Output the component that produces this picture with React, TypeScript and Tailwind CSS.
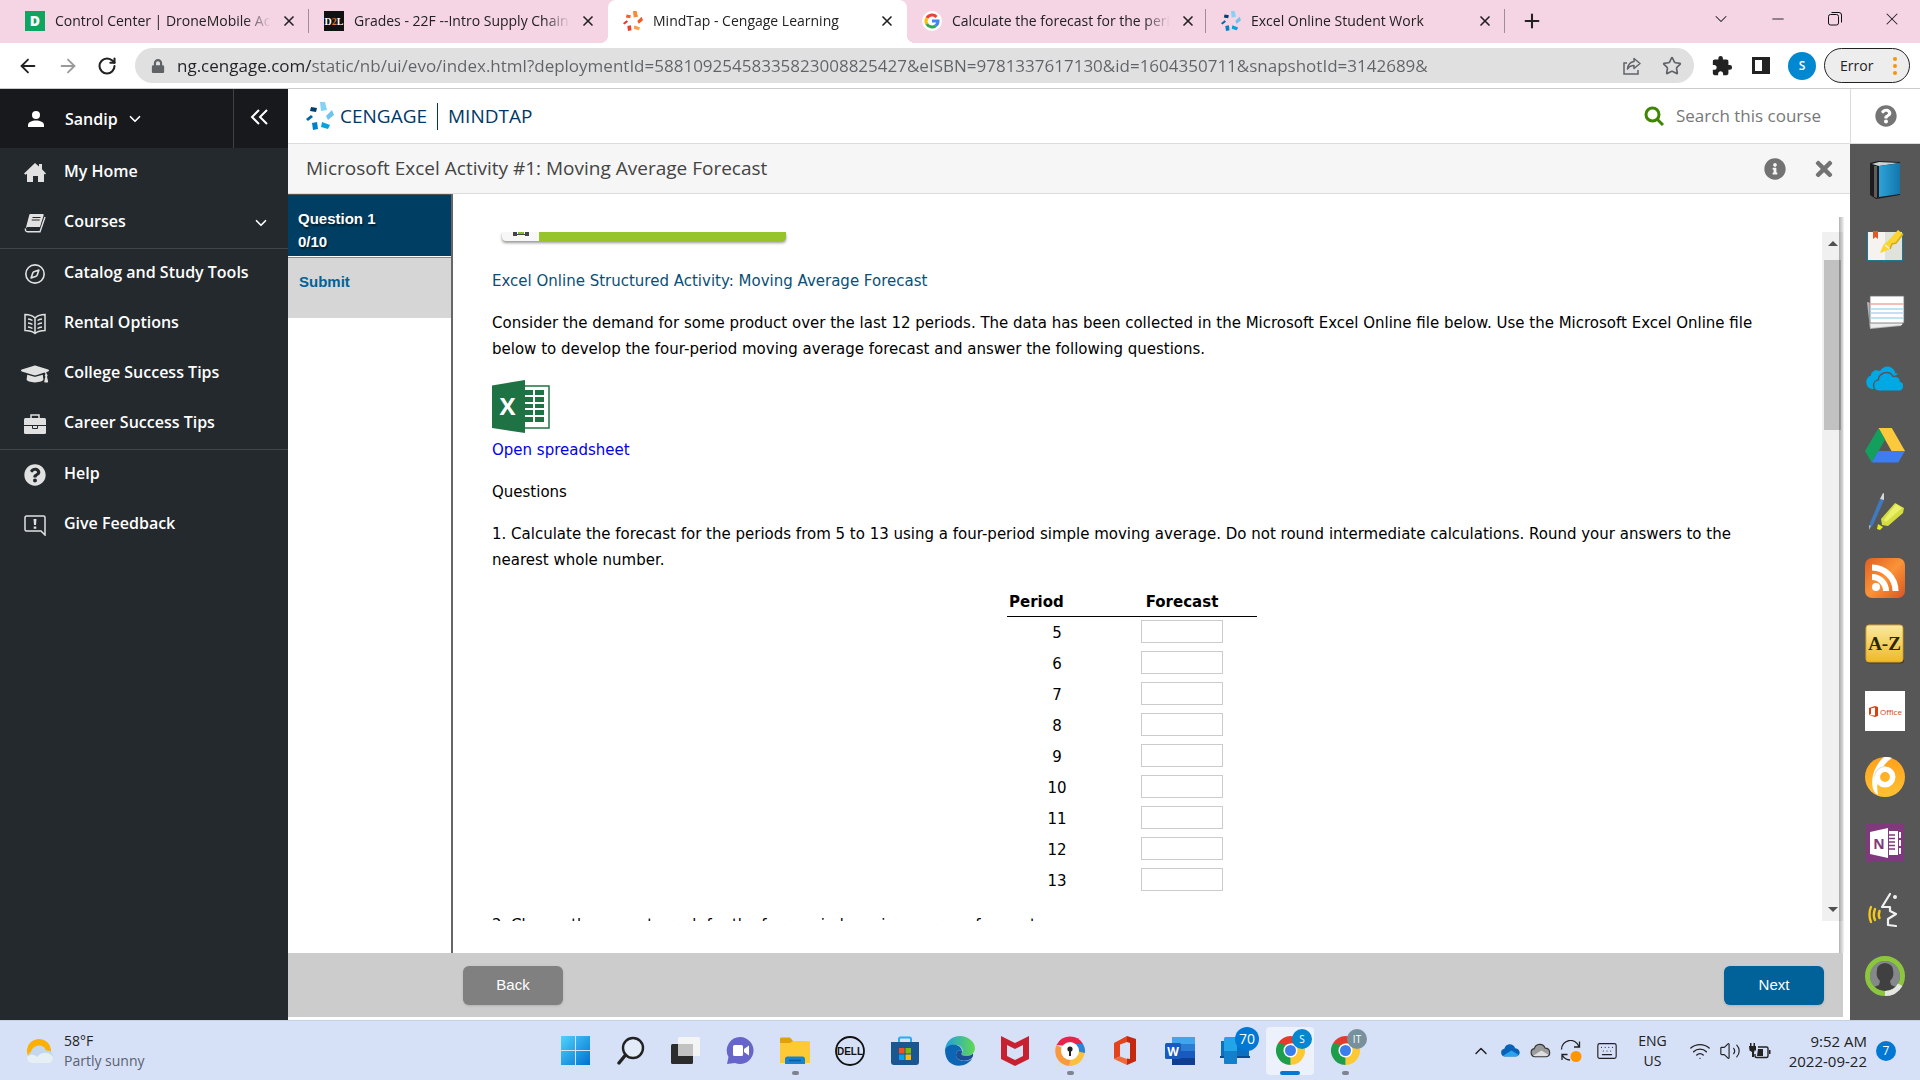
import type { ReactNode } from "react";

import clsx from "clsx";
import {
  ArrowLeft,
  ArrowRight,
  ChevronDown,
  ChevronUp,
  Compass,
  Keyboard,
  Minus,
  Plus,
  RotateCw,
  Star,
  Volume2,
  Wifi,
  X,
} from "lucide-react";
import { FaGraduationCap, FaInfoCircle, FaLock, FaQuestionCircle, FaTimes } from "react-icons/fa";
import { MdExtension } from "react-icons/md";

interface Tab {
  title: string;
  icon: ReactNode;
  active?: boolean;
  divider?: boolean;
}

interface NavItem {
  label: string;
  icon: ReactNode;
  expandable?: boolean;
  ruled?: boolean;
}

interface TaskbarApp {
  name: string;
  icon: ReactNode;
  running?: boolean;
  active?: boolean;
}

const PERIODS = [5, 6, 7, 8, 9, 10, 11, 12, 13];

const PAGE_URL =
  "ng.cengage.com/static/nb/ui/evo/index.html?deploymentId=58810925458335823008825427&eISBN=9781337617130&id=1604350711&snapshotId=3142689&";

/* ---------- logos ---------- */

function CengageMark({ colors, className }: { colors: string[]; className: string }) {
  return (
    <svg viewBox="0 0 28 28" className={className} aria-hidden="true">
      <path d="M14 0h5l2 8-6 1z" fill={colors[0]} />
      <path d="M20 14l6-6 2 5-6 5z" fill={colors[1]} />
      <path d="M16 20l8 3-2 4-7-2z" fill={colors[2]} />
      <path d="M6 21l5-1 1 7-5 1z" fill={colors[3]} />
      <path d="M0 17l5-4 2 2-5 4z" fill={colors[4]} />
      <path d="M5 5l6 1-1 4-6-1z" fill={colors[5]} />
    </svg>
  );
}

const BLUE_MARK = ["#81d3f8", "#6cc5ee", "#00a5e0", "#0082c8", "#0067a5", "#003f6b"];
const ORANGE_MARK = ["#f68b33", "#f05a28", "#f9a04a", "#e8402a", "#ee3124", "#f0632b"];

function DroneMobileIcon() {
  return (
    <svg viewBox="0 0 20 20" className="size-5 shrink-0" aria-hidden="true">
      <rect width="20" height="20" fill="#0ca660" />
      <text x="10" y="15" textAnchor="middle" fontFamily="Open Sans, sans-serif" fontWeight="800" fontSize="14" fill="#fff">
        D
      </text>
    </svg>
  );
}

function BrightspaceIcon() {
  return (
    <svg viewBox="0 0 20 20" className="size-5 shrink-0" aria-hidden="true">
      <rect width="20" height="20" fill="#111" />
      <text x="10" y="14" textAnchor="middle" fontFamily="Liberation Serif, serif" fontWeight="700" fontSize="10" fill="#fff">
        D<tspan fill="#e8762c">2</tspan>L
      </text>
    </svg>
  );
}

function GoogleIcon() {
  return (
    <svg viewBox="0 0 20 20" className="size-5 shrink-0" aria-hidden="true">
      <circle cx="10" cy="10" r="10" fill="#fff" />
      <g fill="none" strokeWidth="3">
        <path d="M14.500 5.900A6 6 0 0 0 4.900 7" stroke="#ea4335" />
        <path d="M4.900 6.900a6 6 0 0 0 0 6.200" stroke="#fbbc05" />
        <path d="M4.800 12.900a6 6 0 0 0 8.900 1.800" stroke="#34a853" />
        <path d="M13.600 14.800A6 6 0 0 0 16 10h-6" stroke="#4285f4" />
      </g>
    </svg>
  );
}

function RestoreIcon() {
  return (
    <svg viewBox="0 0 14 14" className="size-[14px]" fill="none" stroke="#111" aria-hidden="true">
      <rect x="0.5" y="2.5" width="10" height="10.500" rx="2" />
      <path d="M3.500 .5H11a2.500 2.500 0 0 1 2.500 2.500v7.500" />
    </svg>
  );
}

function ShareIcon() {
  return (
    <svg viewBox="0 0 20 20" className="size-5" fill="none" stroke="#5f6368" strokeWidth="1.5" aria-hidden="true">
      <path d="M5 7H2v11h14v-4" />
      <path d="M12 2.500l6 5-6 5V9.500c-3 0-5 1-6.500 3.500.5-4 2.500-7 6.500-7.500z" strokeLinejoin="round" />
    </svg>
  );
}

/* ---------- left navigation ---------- */

function UserIcon() {
  return (
    <svg viewBox="0 0 18 18" className="size-[18px]" fill="#fff" aria-hidden="true">
      <circle cx="9" cy="5" r="4" />
      <path d="M1 17v-2c0-3 4-4.500 8-4.500s8 1.500 8 4.500v2z" />
    </svg>
  );
}

function HomeIcon() {
  return (
    <svg viewBox="0 0 22 20" className="h-5 w-[22px]" fill="#e1e1e1" aria-hidden="true">
      <path d="M11 0l4 3.500V1h3v5.200l4 4.300-1 1-1-.8V19h-6v-6H9v6H3v-8.300l-1.500 1L0 10.500z" />
    </svg>
  );
}

function CoursesIcon() {
  return (
    <svg viewBox="0 0 22 20" className="h-5 w-[22px]" aria-hidden="true">
      <path d="M6 1h12.500c1 0 1.400.7 1.100 1.600L16 14H4.500c-1.500 0-2.500.6-2.800 1.500L5 3c.3-1.200.5-2 1-2z" fill="#e1e1e1" />
      <path d="M1.500 15.500C1 17.500 2 18.700 3.500 18.700H16L21 4" fill="none" stroke="#e1e1e1" strokeWidth="1.400" />
      <path d="M8.500 4.500h8M7.700 7h8" stroke="#24292d" strokeWidth="1.200" />
    </svg>
  );
}

function RentalIcon() {
  return (
    <svg viewBox="0 0 22 22" className="size-[22px]" fill="none" stroke="#e1e1e1" strokeWidth="1.500" aria-hidden="true">
      <path d="M1 1.500c4 0 7 .5 10 3.500 3-3 6-3.500 10-3.500v16c-4 0-7 .5-10 3-3-2.500-6-3-10-3zM11 5v15.500" />
      <path d="M4 6c2 .2 3.500.8 4.500 1.500M4 10c2 .2 3.500.8 4.500 1.500M4 14c2 .2 3.500.8 4.500 1.500M18 6c-2 .2-3.500.8-4.500 1.500M18 10c-2 .2-3.500.8-4.500 1.500M18 14c-2 .2-3.500.8-4.500 1.500" />
    </svg>
  );
}

function CareerIcon() {
  return (
    <svg viewBox="0 0 22 20" className="h-5 w-[22px]" aria-hidden="true">
      <path d="M7 4V1h8v3" fill="none" stroke="#e1e1e1" strokeWidth="1.500" />
      <rect y="4" width="22" height="16" rx="1.500" fill="#e1e1e1" />
      <path d="M0 11.500h22" stroke="#24292d" />
      <path d="M8.500 12v2.500h5V12" fill="none" stroke="#24292d" />
    </svg>
  );
}

function FeedbackIcon() {
  return (
    <svg viewBox="0 0 22 21" className="h-[21px] w-[22px]" aria-hidden="true">
      <path
        d="M2.500 1h17c1 0 1.500.6 1.500 1.500V20l-4-4H2.500C1.500 16 1 15.500 1 14.500v-12C1 1.600 1.500 1 2.500 1z"
        fill="none"
        stroke="#e1e1e1"
        strokeWidth="1.500"
      />
      <path d="M9.500 4h3L12 10h-2zM9.700 11.500h2.600v2.200H9.700z" fill="#e1e1e1" />
    </svg>
  );
}

/* ---------- learning tools ---------- */

function EbookIcon() {
  return (
    <svg viewBox="0 0 40 40" className="size-10" aria-hidden="true">
      <defs>
        <linearGradient id="cover" x1="0" x2="1">
          <stop offset="0" stopColor="#2ea3d8" />
          <stop offset="1" stopColor="#1276ad" />
        </linearGradient>
      </defs>
      <path d="M5 3l8-2 22 1v33L11 39l-6-4z" fill="#1c1c1c" />
      <path d="M9 6v31l3 1V6z" fill="#5d5d5d" />
      <path d="M7 4l7-2 20 1-20 3z" fill="#c9d3d8" />
      <path d="M14 6l21-3v31l-21 3z" fill="url(#cover)" />
    </svg>
  );
}

function NotebookIcon() {
  return (
    <svg viewBox="0 0 40 40" className="size-10" aria-hidden="true">
      <path d="M2 6h36v29H22l-2 1.500L18 35H2z" fill="#1b7893" />
      <path d="M3 6h17v28H3z" fill="#f5f2f0" />
      <path d="M20 6h17v28H20z" fill="#e0e2dc" />
      <path d="M8 5h5v8l-2.500-2L8 13z" fill="#e2582c" />
      <path d="M33 4l5 4-7 9-4 1-2 5-7 3-3 1 2-5 2-4 3-2z" fill="#fbd62e" />
      <path d="M20 19l5 4" stroke="#f5f2f0" strokeWidth="1.500" />
      <path d="M38 8l-7 9-4 1-2 5" fill="none" stroke="#d9a91c" strokeWidth="1.500" />
    </svg>
  );
}

function FlashcardsIcon() {
  return (
    <svg viewBox="0 0 40 40" className="size-10" aria-hidden="true">
      <path d="M2 9l4 1 31 20-1 3L5 36z" fill="#b7b7b7" />
      <path d="M5 29h33l-1 3L6 35z" fill="#ececec" />
      <path d="M5 3h34v27H5z" fill="#fff" stroke="#6c6c6c" strokeWidth="0.800" />
      <path d="M5 11h34" stroke="#f4a7a7" strokeWidth="1.500" />
      <path d="M5 16h34M5 20h34M5 25h34" stroke="#a9dcee" strokeWidth="1.300" />
    </svg>
  );
}

function SkyDriveIcon() {
  return (
    <svg viewBox="0 0 40 26" className="h-[26px] w-10" aria-hidden="true">
      <path d="M7 23a7 7 0 0 1-1-13.500C6 5 11 3 15 5c3-6 13-7 15.500 2.500H33L18 23z" fill="#00a8e4" />
      <path
        d="M14 25.300a5.800 5.800 0 0 1-.6-11.500C14 6.500 24.500 3.500 28 10.500c4-1.200 7.500 1.500 7.500 4.800 4.500.7 4.500 9.500-1 10z"
        fill="#00a8e4"
        stroke="#575757"
        strokeWidth="1.400"
      />
    </svg>
  );
}

function DriveIcon() {
  return (
    <svg viewBox="0 0 40 35" className="h-[35px] w-10" aria-hidden="true">
      <path d="M13.500 0h13.300L40 23H26.500z" fill="#fcc93c" />
      <path d="M13.500 0l6.700 11.500L6.800 34.500 0 23z" fill="#12a05c" />
      <path d="M13.300 23H40l-6.800 11.500H6.700z" fill="#3d7df0" />
    </svg>
  );
}

function PensIcon() {
  return (
    <svg viewBox="0 0 40 40" className="size-10" aria-hidden="true">
      <path d="M15 7l4 1L8 33l-4 4 1-6z" fill="#3f79bf" />
      <path d="M15 7l3-6 1 .500V8z" fill="#d5d9dd" />
      <path d="M4 33l2 1-2 4z" fill="#aab4c0" />
      <path d="M30 11l9 5-1 5-15 13-6-1-1-6z" fill="#d6de3f" />
      <path d="M31 12l6 4-16 14-2-2z" fill="#eaf06a" />
      <path d="M13 32l5 3-3 3-3-1z" fill="#e6ed18" />
    </svg>
  );
}

function FeedIcon() {
  return (
    <svg viewBox="0 0 40 40" className="size-10" aria-hidden="true">
      <defs>
        <linearGradient id="feed" x1="0" y1="0" x2="1" y2="1">
          <stop offset="0" stopColor="#de5f22" />
          <stop offset=".5" stopColor="#fb9337" />
          <stop offset="1" stopColor="#d9561e" />
        </linearGradient>
      </defs>
      <rect width="40" height="40" rx="7" fill="url(#feed)" />
      <circle cx="11" cy="29" r="4" fill="#fff" />
      <path d="M7 19a14 14 0 0 1 14 14M7 9.500A23.500 23.500 0 0 1 30.500 33" fill="none" stroke="#fff" strokeWidth="6" />
    </svg>
  );
}

function GlossaryIcon() {
  return (
    <svg viewBox="0 0 40 40" className="size-10" aria-hidden="true">
      <defs>
        <linearGradient id="gold" x2="0" y2="1">
          <stop offset="0" stopColor="#fae9a0" />
          <stop offset="1" stopColor="#efb927" />
        </linearGradient>
      </defs>
      <rect x="2" y="2.500" width="37" height="37" rx="3" fill="#3c3c3c" />
      <rect x="1" y="1" width="37" height="37" rx="3" fill="url(#gold)" stroke="#dba729" />
      <text x="19.500" y="26" textAnchor="middle" fontFamily="Liberation Serif, serif" fontWeight="700" fontSize="19" fill="#2d260d">
        A-Z
      </text>
    </svg>
  );
}

function OfficeTileIcon() {
  return (
    <svg viewBox="0 0 40 40" className="size-10" aria-hidden="true">
      <rect width="40" height="40" fill="#fff" />
      <path d="M4 17l6-2 3 1v9l-3 1-6-2 6 .500v-8l-4 1v5.500l-2 1z" fill="#dc3e15" />
      <text x="15" y="23.500" fontFamily="Open Sans, sans-serif" fontSize="8" fill="#dc3e15">
        Office
      </text>
    </svg>
  );
}

function BongoIcon() {
  return (
    <svg viewBox="0 0 40 40" className="size-10" aria-hidden="true">
      <defs>
        <linearGradient id="amber" x2="0" y2="1">
          <stop offset="0" stopColor="#ffa11a" />
          <stop offset="1" stopColor="#ffc233" />
        </linearGradient>
      </defs>
      <circle cx="20" cy="20" r="20" fill="url(#amber)" />
      <path d="M19 0c3-.2 6 .2 8 1C16 8 10 22 13 38c-9-4-8-26 6-38z" fill="#fff" />
      <circle cx="20" cy="20" r="7.700" fill="none" stroke="#fff" strokeWidth="5.500" />
      <path d="M20 9.500a10.500 10.500 0 0 0-10.500 10" fill="none" stroke="#dedede" strokeWidth="1.200" />
    </svg>
  );
}

function OneNoteIcon() {
  return (
    <svg viewBox="0 0 38 38" className="size-[38px]" aria-hidden="true">
      <rect width="38" height="38" fill="#80397b" />
      <path d="M4 8l18-4v30L4 30z" fill="#fff" />
      <text x="13" y="24.500" textAnchor="middle" fontFamily="Open Sans, sans-serif" fontWeight="700" fontSize="14" fill="#80397b">
        N
      </text>
      <path d="M23 7h9v24h-9z" fill="#fff" />
      <path d="M23 11h6M23 14.500h6M23 18h6M23 21.500h6M23 25h6" stroke="#80397b" strokeWidth="1.300" />
      <path d="M33 8h2v6h-2zM33 16h2v6h-2zM33 24h2v6h-2z" fill="#fff" />
    </svg>
  );
}

function ReadSpeakerIcon() {
  return (
    <svg viewBox="0 0 36 36" className="size-9" fill="none" strokeLinecap="round" strokeLinejoin="round" aria-hidden="true">
      <path d="M23 2l-8 13h8v4l6 3-8 5v6l8 1" stroke="#f1f1f1" strokeWidth="2.200" />
      <circle cx="28" cy="5" r="2" fill="#f1f1f1" />
      <path d="M4 15c-2 4-2 11 0 15M8 17c-1.500 4-1.500 8 0 11M12.500 19c-1 3-1 5 0 7" stroke="#f3c91b" strokeWidth="2.400" />
    </svg>
  );
}

function ProgressIcon() {
  return (
    <svg viewBox="0 0 40 40" className="size-10" aria-hidden="true">
      <circle cx="20" cy="20" r="15" fill="#85888b" />
      <path d="M12 14c0-9 16-9 16 0 1 5 0 8-3 11l1 4 5 2-5 5H14l-5-5 5-2 1-4c-3-3-4-6-3-11z" fill="#404041" />
      <circle cx="20" cy="20" r="17.500" fill="none" stroke="#8bc63e" strokeWidth="5" />
      <path d="M35.200 28.700A17.500 17.500 0 0 1 20 37.500" fill="none" stroke="#e6e6e6" strokeWidth="5" />
    </svg>
  );
}

function ExcelIcon() {
  return (
    <svg viewBox="0 0 58 53" className="h-[53px] w-[58px]" aria-hidden="true">
      <rect x="30" y="6" width="27" height="42" fill="#fff" stroke="#1f7244" strokeWidth="1.500" />
      <path
        d="M33 10h8v5h-8zM43 10h9v5h-9zM33 17h8v5h-8zM43 17h9v5h-9zM33 24h8v4h-8zM43 24h9v4h-9zM33 30h8v5h-8zM43 30h9v5h-9zM33 37h8v5h-8zM43 37h9v5h-9z"
        fill="#1f7244"
      />
      <path d="M0 5.500L33 0v53L0 48z" fill="#1f7244" />
      <text x="15.500" y="35" textAnchor="middle" fontFamily="Open Sans, sans-serif" fontWeight="700" fontSize="24" fill="#fff">
        X
      </text>
    </svg>
  );
}

/* ---------- taskbar ---------- */

function WeatherIcon() {
  return (
    <svg viewBox="0 0 28 24" className="h-6 w-7" aria-hidden="true">
      <circle cx="13" cy="12" r="12" fill="#fbb005" />
      <path d="M6 24a6 6 0 0 1-1-11c2-8 13-9 15-1.500 8-1 10 10.500 3 12.500z" fill="#c3d8ee" />
      <path d="M1 18c4-4 9-2 10 0 4-5 12-6 16 0 0 4-2 6-5 6H6c-3 0-5-3-5-6z" fill="#e6eef6" />
    </svg>
  );
}

function StartIcon() {
  return (
    <svg viewBox="0 0 29 29" className="size-[29px]" aria-hidden="true">
      <defs>
        <linearGradient id="start" x1="0" y1="0" x2="29" y2="29" gradientUnits="userSpaceOnUse">
          <stop offset="0" stopColor="#4fd3fc" />
          <stop offset="1" stopColor="#0171d0" />
        </linearGradient>
      </defs>
      <path d="M0 0h14v14H0zM15 0h14v14H15zM0 15h14v14H0zM15 15h14v14H15z" fill="url(#start)" />
    </svg>
  );
}

function SearchTaskIcon() {
  return (
    <svg viewBox="0 0 29 29" className="size-[29px]" fill="none" stroke="#222" strokeWidth="2.400" aria-hidden="true">
      <circle cx="17" cy="12" r="10" fill="#e3ebf9" />
      <path d="M9.500 19L3 27" strokeWidth="3.400" strokeLinecap="round" />
    </svg>
  );
}

function TaskViewIcon() {
  return (
    <svg viewBox="0 0 29 29" className="size-[29px]" aria-hidden="true">
      <rect x="0" y="8" width="22" height="20" rx="1.500" fill="#2c2c2c" />
      <rect x="7" y="1" width="22" height="19" rx="1.500" fill="#f4f4f4" />
      <path d="M7 8h15v12H7z" fill="#c2c2c2" />
    </svg>
  );
}

function ChatIcon() {
  return (
    <svg viewBox="0 0 29 29" className="size-[29px]" aria-hidden="true">
      <path d="M15 1a13.500 13.500 0 1 1-6 26L1 28l1.500-7A13.500 13.500 0 0 1 15 1z" fill="#6765c9" />
      <rect x="7" y="9" width="10" height="11" rx="1.500" fill="#fff" />
      <path d="M18 13l5-3.500v10L18 16z" fill="#fff" />
    </svg>
  );
}

function ExplorerIcon() {
  return (
    <svg viewBox="0 0 30 28" className="h-7 w-[30px]" aria-hidden="true">
      <path d="M0 2c0-1 .6-1.500 1.500-1.500H10L13 4v8H0z" fill="#e0a00b" />
      <path d="M0 6h10l3-2h15.500c1 0 1.500.6 1.500 1.500V26H0z" fill="#fdca36" />
      <path d="M5 27v-5c0-1.500 1-2.500 2.500-2.500h15c1.500 0 2.500 1 2.500 2.500v5z" fill="#1583d4" />
      <path d="M9 23.500h12" stroke="#0b5ba1" strokeWidth="1.500" />
    </svg>
  );
}

function DellIcon() {
  return (
    <svg viewBox="0 0 30 30" className="size-[30px]" aria-hidden="true">
      <circle cx="15" cy="15" r="14" fill="none" stroke="#111" strokeWidth="1.800" />
      <text x="15" y="18.500" textAnchor="middle" fontFamily="Liberation Sans, sans-serif" fontWeight="700" fontSize="10" fill="#111">
        DELL
      </text>
    </svg>
  );
}

function StoreIcon() {
  return (
    <svg viewBox="0 0 30 30" className="size-[30px]" aria-hidden="true">
      <path d="M9 7V3c0-1 .5-1.500 1.500-1.500h9c1 0 1.500.5 1.500 1.500v4" fill="none" stroke="#25aef0" strokeWidth="2" />
      <path d="M1 6h28v20c0 2-1 3-3 3H4c-2 0-3-1-3-3z" fill="#1a568f" />
      <path d="M9 12h5.500v5.500H9z" fill="#f25022" />
      <path d="M15.500 12H21v5.500h-5.500z" fill="#7fba00" />
      <path d="M9 18.500h5.500V24H9z" fill="#00a4ef" />
      <path d="M15.500 18.500H21V24h-5.500z" fill="#ffb900" />
    </svg>
  );
}

function EdgeIcon() {
  return (
    <svg viewBox="0 0 30 30" className="size-[30px]" aria-hidden="true">
      <defs>
        <linearGradient id="edgeTop" x1="0" x2="1">
          <stop offset="0" stopColor="#219fe0" />
          <stop offset="1" stopColor="#62d94f" />
        </linearGradient>
      </defs>
      <path d="M0 14C1 5 7 0 15 0s15 6 15 12c0 5-4 8-9 8-3 0-5-1-4.500-2.500C19 14 17 10 12 9 7 8.500 2 10 0 14z" fill="url(#edgeTop)" />
      <path d="M0 14c1-4 6-6 11-5 3 .5 6 3 6 6-2-2-6 0-6 4 0 5 8 8 16 4-7 10-27 10-27-9z" fill="#0c66b4" />
      <path d="M11 19c0-4 4-6 6-4 0 1 0 1.500-.5 2.500C16 19 18 20 21 20c3 0 5-.7 7-2.500.5 2-.5 4-1.500 5C19 27 11 24 11 19z" fill="#1b4e94" />
    </svg>
  );
}

function McAfeeIcon() {
  return (
    <svg viewBox="0 0 28 30" className="h-[30px] w-7" aria-hidden="true">
      <path d="M0 0l14 7 14-7v23l-14 7-14-7zM6 9v11l8 4 8-4V9l-8 4z" fill="#c8202f" fillRule="evenodd" />
    </svg>
  );
}

function SecureBrowserIcon() {
  return (
    <svg viewBox="0 0 30 30" className="size-[30px]" aria-hidden="true">
      <path d="M1.500 9A15 15 0 0 1 28 8l-13 2z" fill="#e8244a" />
      <path d="M1.500 9A15 15 0 0 0 14 30l4-12z" fill="#fb9a3c" />
      <path d="M28 8a15 15 0 0 1-14 22l5-14z" fill="#fbc13c" />
      <path d="M28 8a15 15 0 0 1 2 9l-9-2V8z" fill="#2e83d6" />
      <circle cx="15" cy="15" r="9" fill="#fff" />
      <circle cx="15" cy="13" r="2.600" fill="#222" />
      <path d="M14 14h2v6h-2z" fill="#222" />
    </svg>
  );
}

function OfficeIcon() {
  return (
    <svg viewBox="0 0 24 29" className="h-[29px] w-6" aria-hidden="true">
      <path d="M1 7L14 0v6l-7 2.500v12L1 23z" fill="#e2451e" />
      <path d="M14 0l9 3v22l-9 4z" fill="#c4280f" />
      <path d="M14 6l3 1v16l-3-.500z" fill="#d6e0f7" />
      <path d="M1 23l6-2.500L14 23v6z" fill="#f06a38" />
    </svg>
  );
}

function WordIcon() {
  return (
    <svg viewBox="0 0 30 28" className="h-7 w-[30px]" aria-hidden="true">
      <path d="M7 0h23v7H7z" fill="#41a5ee" />
      <path d="M7 7h23v7H7z" fill="#2b7cd3" />
      <path d="M7 14h23v7H7z" fill="#185abd" />
      <path d="M7 21h23v7H7z" fill="#103f91" />
      <rect y="6" width="16" height="16" rx="1.500" fill="#185abd" />
      <text x="8" y="18.500" textAnchor="middle" fontFamily="Open Sans, sans-serif" fontWeight="700" fontSize="12" fill="#fff">
        W
      </text>
    </svg>
  );
}

function PhoneLinkIcon() {
  return (
    <svg viewBox="0 0 30 28" className="h-7 w-[30px]" aria-hidden="true">
      <rect x="1" y="4" width="28" height="15" fill="#0d6fbf" />
      <rect x="4" y="0" width="13" height="27" rx="1.500" fill="#22a5e8" />
      <path d="M4 14h13v11.500c0 1-.5 1.500-1.500 1.500h-10c-1 0-1.500-.5-1.500-1.500z" fill="#1380cc" />
      <path d="M0 19h4v2H0zM17 19h13v2H17z" fill="#0b4f91" />
    </svg>
  );
}

function ChromeIcon() {
  return (
    <svg viewBox="0 0 29 29" className="size-[29px]" aria-hidden="true">
      <path d="M14.500 14.500L2 7.200A14.500 14.500 0 0 1 27 7.200z" fill="#e33b2e" />
      <path d="M14.500 14.500L27 7.200A14.500 14.500 0 0 1 14.500 29z" fill="#fcc934" />
      <path d="M14.500 14.500V29A14.500 14.500 0 0 1 2 7.200z" fill="#1e9e4a" />
      <path d="M14.500 7.200H27l-6.200 10.900z" fill="#fcc934" />
      <path d="M8.200 18.100L2 7.200l9 2z" fill="#1e9e4a" />
      <circle cx="14.500" cy="14.500" r="7" fill="#fff" />
      <circle cx="14.500" cy="14.500" r="5.500" fill="#3b7ded" />
    </svg>
  );
}

function CloudIcon({ top, bottom, outline }: { top: string; bottom: string; outline?: string }) {
  return (
    <svg viewBox="0 0 22 16" className="h-[15px] w-[21px]" aria-hidden="true">
      <path
        d="M5 14.500a4.300 4.300 0 0 1-.6-8.500C6 .5 13.500-.5 16 5.500c6 .3 6.500 8.300 1 9z"
        fill={top}
        stroke={outline}
        strokeWidth="1.200"
      />
      <path d="M3 13.500L12 8l7.500 4.500c-.5 1-1.500 1.500-2.500 1.500H5c-.8 0-1.500-.2-2-.5z" fill={bottom} />
    </svg>
  );
}

function SyncIcon() {
  return (
    <svg viewBox="0 0 22 22" className="size-[22px]" fill="none" stroke="#222" strokeWidth="1.300" aria-hidden="true">
      <path d="M1.500 9.500A9 9 0 0 1 19 6.500M19.500 1.500v5.500H14M2 20v-5.500h5.500M2.500 15.500A9 9 0 0 0 10 20" />
      <circle cx="16" cy="16.500" r="5.500" fill="#ff9503" stroke="none" />
    </svg>
  );
}

function BatteryIcon() {
  return (
    <svg viewBox="0 0 22 16" className="h-4 w-[22px]" fill="none" stroke="#222" strokeWidth="1.400" aria-hidden="true">
      <path d="M9 4h8.500c1 0 1.500.5 1.500 1.500V13c0 1-.5 1.500-1.500 1.500H7.500c-1 0-1.500-.5-1.500-1.500v-2" />
      <path d="M9 6h5v7H8zM20 7h1.500v4H20z" fill="#222" stroke="none" />
      <path d="M0 3h7v4.500H5.500L5 10v4H3V9L.500 7.500zM1 0h1.500v3H1zM4.500 0H6v3H4.500z" fill="#222" stroke="none" />
    </svg>
  );
}

/* ---------- data ---------- */

const TABS: Tab[] = [
  { title: "Control Center | DroneMobile Ac", icon: <DroneMobileIcon />, divider: true },
  { title: "Grades - 22F --Intro Supply Chain", icon: <BrightspaceIcon /> },
  { title: "MindTap - Cengage Learning", icon: <CengageMark colors={ORANGE_MARK} className="size-5 shrink-0" />, active: true },
  { title: "Calculate the forecast for the peri", icon: <GoogleIcon />, divider: true },
  { title: "Excel Online Student Work", icon: <CengageMark colors={BLUE_MARK} className="size-5 shrink-0" />, divider: true },
];

const NAV_ITEMS: NavItem[] = [
  { label: "My Home", icon: <HomeIcon /> },
  { label: "Courses", icon: <CoursesIcon />, expandable: true },
  { label: "Catalog and Study Tools", icon: <Compass className="size-[22px] text-[#e1e1e1]" strokeWidth={1.75} />, ruled: true },
  { label: "Rental Options", icon: <RentalIcon /> },
  { label: "College Success Tips", icon: <FaGraduationCap className="size-7 -scale-x-100 text-[#e1e1e1]" /> },
  { label: "Career Success Tips", icon: <CareerIcon /> },
  { label: "Help", icon: <FaQuestionCircle className="size-[22px] text-[#e1e1e1]" />, ruled: true },
  { label: "Give Feedback", icon: <FeedbackIcon /> },
];

const TOOLS: { name: string; icon: ReactNode }[] = [
  { name: "eBook", icon: <EbookIcon /> },
  { name: "Notebook", icon: <NotebookIcon /> },
  { name: "Flashcards", icon: <FlashcardsIcon /> },
  { name: "OneDrive", icon: <SkyDriveIcon /> },
  { name: "Google Drive", icon: <DriveIcon /> },
  { name: "Highlights", icon: <PensIcon /> },
  { name: "RSS feed", icon: <FeedIcon /> },
  { name: "Glossary", icon: <GlossaryIcon /> },
  { name: "Office", icon: <OfficeTileIcon /> },
  { name: "Bongo", icon: <BongoIcon /> },
  { name: "OneNote", icon: <OneNoteIcon /> },
  { name: "ReadSpeaker", icon: <ReadSpeakerIcon /> },
  { name: "Progress", icon: <ProgressIcon /> },
];

const APPS: TaskbarApp[] = [
  { name: "Start", icon: <StartIcon /> },
  { name: "Search", icon: <SearchTaskIcon /> },
  { name: "Task view", icon: <TaskViewIcon /> },
  { name: "Chat", icon: <ChatIcon /> },
  { name: "File Explorer", icon: <ExplorerIcon />, running: true },
  { name: "Dell", icon: <DellIcon /> },
  { name: "Microsoft Store", icon: <StoreIcon /> },
  { name: "Edge", icon: <EdgeIcon /> },
  { name: "McAfee", icon: <McAfeeIcon /> },
  { name: "Secure Browser", icon: <SecureBrowserIcon />, running: true },
  { name: "Office", icon: <OfficeIcon /> },
  { name: "Word", icon: <WordIcon /> },
  {
    name: "Phone Link",
    icon: (
      <>
        <PhoneLinkIcon />
        <span className="absolute top-0 right-0 flex size-6 items-center justify-center rounded-full bg-[#0078d4] text-sm text-white">
          70
        </span>
      </>
    ),
  },
  {
    name: "Chrome",
    icon: (
      <>
        <ChromeIcon />
        <span className="absolute top-0.5 right-0.5 flex size-5 items-center justify-center rounded-full bg-[#0288d1] text-[10px] text-white">
          S
        </span>
      </>
    ),
    running: true,
    active: true,
  },
  {
    name: "Chrome, second profile",
    icon: (
      <>
        <ChromeIcon />
        <span className="absolute top-0.5 right-0.5 flex size-5 items-center justify-center rounded-full bg-[#78909c] text-[10px] text-white">
          IT
        </span>
      </>
    ),
    running: true,
  },
];

/* ---------- sections ---------- */

function TabStrip() {
  return (
    <div className="flex h-[43px] shrink-0 bg-[#f5d4e3] pl-[10px] text-[#222]">
      {TABS.map((tab) => (
        <div
          key={tab.title}
          className={clsx(
            "relative flex w-[299px] items-center gap-[10px] pr-3 pb-0.5 pl-[15px]",
            tab.active &&
              "rounded-t-lg bg-white before:absolute before:bottom-0 before:-left-2 before:size-2 before:bg-[radial-gradient(circle_at_0_0,transparent_8px,white_8px)] after:absolute after:-right-2 after:bottom-0 after:size-2 after:bg-[radial-gradient(circle_at_100%_0,transparent_8px,white_8px)]",
          )}
        >
          {tab.icon}
          <span className="flex-1 [mask-image:linear-gradient(to_right,black_88%,transparent)] text-[14px] whitespace-nowrap">
            {tab.title}
          </span>
          <button type="button" aria-label={`Close ${tab.title}`}>
            <X className="size-4" strokeWidth={2.5} />
          </button>
          {tab.divider ? <span className="absolute top-[9px] right-0 h-6 w-px bg-[#a08e97]" /> : null}
        </div>
      ))}
      <button type="button" aria-label="New tab" className="ml-4 pb-0.5">
        <Plus className="size-[22px]" strokeWidth={2.25} />
      </button>
      <div className="ml-auto flex items-center pb-1.5">
        <button type="button" aria-label="Search tabs" className="flex w-[57px] justify-center">
          <ChevronDown className="size-5" strokeWidth={1.25} />
        </button>
        <button type="button" aria-label="Minimize" className="flex w-[57px] justify-center">
          <Minus className="size-[18px]" strokeWidth={1.25} />
        </button>
        <button type="button" aria-label="Restore" className="flex w-[57px] justify-center">
          <RestoreIcon />
        </button>
        <button type="button" aria-label="Close window" className="flex w-[57px] justify-center">
          <X className="size-5" strokeWidth={1.25} />
        </button>
      </div>
    </div>
  );
}

function AddressBar() {
  return (
    <div className="flex h-[46px] shrink-0 items-center border-b border-[#cbcbcb] bg-white pr-[10px] pl-[17px] text-[#222]">
      <button type="button" aria-label="Back" className="w-10">
        <ArrowLeft className="size-[22px]" />
      </button>
      <button type="button" aria-label="Forward" className="w-10 text-[#9a9a9a]">
        <ArrowRight className="size-[22px]" />
      </button>
      <button type="button" aria-label="Reload" className="w-[38px]">
        <RotateCw className="size-5" strokeWidth={2.5} />
      </button>
      <div className="flex h-[35px] flex-1 items-center rounded-full bg-[#e0e0e0] pr-3 pl-4">
        <FaLock className="mr-3 size-[14px] text-[#5f6368]" />
        <input
          aria-label="Address"
          defaultValue={PAGE_URL}
          className="min-w-0 flex-1 bg-[linear-gradient(to_right,#202124_135px,#5f6368_135px)] bg-clip-text text-[17px] text-transparent outline-none"
        />
        <button type="button" aria-label="Share" className="mr-5">
          <ShareIcon />
        </button>
        <button type="button" aria-label="Bookmark">
          <Star className="size-5 text-[#5f6368]" />
        </button>
      </div>
      <button type="button" aria-label="Extensions" className="ml-[17px]">
        <MdExtension className="size-[22px]" />
      </button>
      <button type="button" aria-label="Side panel" className="ml-[19px] h-[17px] w-[18px] border-[3px] border-r-[8px] border-[#222]" />
      <button
        type="button"
        aria-label="Profile"
        className="ml-[18px] flex size-7 items-center justify-center rounded-full bg-[#0288d1] text-xs font-semibold text-white"
      >
        S
      </button>
      <button
        type="button"
        className="ml-2 flex h-[35px] w-[86px] items-center justify-between rounded-full border border-[#222] bg-[#ededed] pr-3 pl-[15px] text-[14px]"
      >
        Error
        <span className="flex flex-col gap-[3px]">
          <span className="size-1 rounded-full bg-[#f29900]" />
          <span className="size-1 rounded-full bg-[#f29900]" />
          <span className="size-1 rounded-full bg-[#f29900]" />
        </span>
      </button>
    </div>
  );
}

function SideNav() {
  return (
    <nav className="w-72 shrink-0 bg-[#24292d] font-semibold text-white">
      <div className="flex h-[59px] bg-[#17191c]">
        <button type="button" className="flex flex-1 items-center pl-[27px]">
          <UserIcon />
          <span className="mr-2 ml-5">Sandip</span>
          <ChevronDown className="size-[18px]" strokeWidth={2.25} />
        </button>
        <button
          type="button"
          aria-label="Collapse menu"
          className="flex w-[55px] items-center justify-center border-l border-[#3d4246] pr-1 pb-1"
        >
          <svg viewBox="0 0 18 16" className="h-4 w-[18px]" fill="none" stroke="#fff" strokeWidth="2" aria-hidden="true">
            <path d="M9 1L2 8l7 7M17 1l-7 7 7 7" />
          </svg>
        </button>
      </div>
      <ul>
        {NAV_ITEMS.map((item) => (
          <li key={item.label} className={clsx(item.ruled && "border-t border-[#40464a]")}>
            <a href="#" className="flex h-[50px] items-center pr-[18px]">
              <span className="mr-[14px] flex w-[50px] justify-end">
                <span className="flex w-[30px] justify-center">{item.icon}</span>
              </span>
              <span className="pb-1">{item.label}</span>
              {item.expandable ? <ChevronDown className="ml-auto size-[18px]" strokeWidth={2.25} /> : null}
            </a>
          </li>
        ))}
      </ul>
    </nav>
  );
}

function CourseHeader() {
  return (
    <>
      <header className="flex h-[55px] shrink-0 items-center border-b border-[#dcdcdc] bg-white pr-5 pl-[18px]">
        <a href="#" className="flex items-center text-[19px] text-[#003865]">
          <CengageMark colors={BLUE_MARK} className="mr-[6px] size-7" />
          CENGAGE
          <span className="mx-[10px] h-[27px] w-px bg-[#003865]" />
          MINDTAP
        </a>
        <label className="ml-auto flex items-center">
          <svg viewBox="0 0 20 20" className="mr-3 size-5" fill="none" stroke="#3f8500" strokeWidth="3" aria-hidden="true">
            <circle cx="8.500" cy="8.500" r="6.500" />
            <path d="M13 13l6 6" />
          </svg>
          <input
            type="text"
            aria-label="Search this course"
            placeholder="Search this course"
            className="w-[154px] text-[17px] outline-none placeholder:text-[#777]"
          />
        </label>
      </header>
      <div className="flex h-[50px] shrink-0 items-center border-b border-[#dcdcdc] bg-[#f6f6f6] pr-[14px] pl-[18px] text-[#737373]">
        <h1 className="text-[19px] text-[#444]">Microsoft Excel Activity #1: Moving Average Forecast</h1>
        <button type="button" aria-label="Information" className="ml-auto">
          <FaInfoCircle className="size-[22px]" />
        </button>
        <button type="button" aria-label="Close activity" className="ml-[26px]">
          <FaTimes className="size-6" />
        </button>
      </div>
    </>
  );
}

function QuestionList() {
  return (
    <div className="w-[165px] shrink-0 border-r-2 border-[#666] font-['Liberation_Sans',Arial,sans-serif] text-[15px] leading-[23px] font-bold">
      <button
        type="button"
        className="block h-[62px] w-full border-t border-[#555] bg-[#003f63] px-[10px] pt-2 text-left text-white [text-shadow:1px_2px_2px_rgba(0,0,0,0.6)]"
      >
        Question 1
        <br />
        0/10
      </button>
      <button
        type="button"
        className="mt-px block h-[61px] w-full border-t border-[#888] bg-[#d6d6d6] px-[11px] pb-[14px] text-left text-[#006298]"
      >
        Submit
      </button>
    </div>
  );
}

function ForecastTable() {
  return (
    <table className="mx-auto mt-4 w-[250px] table-fixed border-collapse">
      <thead>
        <tr className="border-b border-black">
          <th className="w-[100px] pb-px pl-0.5 text-left font-bold">Period</th>
          <th className="pb-px text-center font-bold">Forecast</th>
        </tr>
      </thead>
      <tbody>
        {PERIODS.map((period) => (
          <tr key={period}>
            <td className="h-[31px] pt-0.5 text-center">{period}</td>
            <td className="pb-px">
              <input
                aria-label={`Forecast for period ${period}`}
                className="mx-auto block h-[23px] w-[82px] border border-[#ccc] px-1 outline-none"
              />
            </td>
          </tr>
        ))}
      </tbody>
    </table>
  );
}

function Scrollbar() {
  return (
    <div className="flex w-[21px] shrink-0 flex-col items-center bg-[#f0f0f0]">
      <span className="mt-[9px] border-x-[5px] border-b-[5px] border-x-transparent border-b-[#505050]" />
      <span className="mt-[14px] h-[170px] w-[17px] bg-[#c1c1c1]" />
      <span className="mt-auto mb-[9px] border-x-[5px] border-t-[5px] border-x-transparent border-t-[#505050]" />
    </div>
  );
}

function Activity() {
  return (
    <section className="relative flex min-h-0 min-w-0 flex-1 bg-white pt-[38px] pr-[7px] pb-8">
      <div className="min-w-0 flex-1 overflow-hidden pr-[50px] pl-[39px] font-['DejaVu_Sans',Verdana,sans-serif] text-[15px] leading-[26px] text-black">
        <div className="ml-[10px] flex h-[9px] w-[284px] rounded-b-sm bg-[#96c42a] shadow-[0_2px_3px_rgba(0,0,0,0.4)]">
          <div className="flex w-[37px] justify-center rounded-bl-sm bg-[#f7f7f7]">
            <svg viewBox="0 0 16 5" className="h-[5px] w-4" aria-hidden="true">
              <path d="M0 0h4v4H0zM12 0h4v4h-4z" fill="#444" />
              <path d="M4 2.500h8" stroke="#444" />
              <path d="M5 0h6v2H5z" fill="#83b62d" />
            </svg>
          </div>
        </div>
        <h2 className="mt-[27px] text-[#0a4f75]">Excel Online Structured Activity: Moving Average Forecast</h2>
        <p className="mt-4">
          Consider the demand for some product over the last 12 periods. The data has been collected in the Microsoft Excel
          Online file below. Use the Microsoft Excel Online file below to develop the four-period moving average forecast and
          answer the following questions.
        </p>
        <a href="#" className="mt-[18px] block w-fit text-[#0000ee]">
          <span className="mb-1 block">
            <ExcelIcon />
          </span>
          Open spreadsheet
        </a>
        <p className="mt-4">Questions</p>
        <p className="mt-4">
          1. Calculate the forecast for the periods from 5 to 13 using a four-period simple moving average. Do not round
          intermediate calculations. Round your answers to the nearest whole number.
        </p>
        <ForecastTable />
        <p className="mt-4">2. Choose the correct graph for the four-period moving average forecast.</p>
      </div>
      <Scrollbar />
      <div className="absolute top-[23px] right-[6px] bottom-0 w-[5px] bg-linear-to-r from-black/30 to-black/5" />
    </section>
  );
}

function ToolRail() {
  return (
    <aside className="flex w-[70px] shrink-0 flex-col bg-[#575757]">
      <button
        type="button"
        aria-label="Help"
        className="flex h-[55px] shrink-0 items-center justify-center border-b border-l border-[#dcdcdc] bg-white"
      >
        <FaQuestionCircle className="size-[22px] text-[#757575]" />
      </button>
      <div className="flex min-h-0 flex-1 flex-col items-center justify-between pt-4 pb-6">
        {TOOLS.map((tool) => (
          <button key={tool.name} type="button" aria-label={tool.name} className="flex size-10 items-center justify-center">
            {tool.icon}
          </button>
        ))}
      </div>
    </aside>
  );
}

function Taskbar() {
  return (
    <footer className="relative flex h-[60px] shrink-0 items-center justify-between border-t border-[#c5cfe6] bg-[#d6e0f7] pr-6 pl-[26px] text-[14px] leading-5 text-[#222]">
      <div className="flex items-center gap-[10px]">
        <WeatherIcon />
        <div>
          <p>58°F</p>
          <p className="text-[#5a6270]">Partly sunny</p>
        </div>
      </div>
      <div className="absolute left-1/2 flex -translate-x-1/2 gap-[7px]">
        {APPS.map((app) => (
          <button
            key={app.name}
            type="button"
            aria-label={app.name}
            className={clsx("relative flex size-12 items-center justify-center rounded", app.active && "bg-[#edf1fb]")}
          >
            {app.icon}
            {app.running ? (
              <span
                className={clsx(
                  "absolute bottom-0 h-1 rounded-full",
                  app.active ? "w-5 bg-[#0078d4]" : "w-[7px] bg-[#7d8490]",
                )}
              />
            ) : null}
          </button>
        ))}
      </div>
      <div className="flex items-center">
        <ChevronUp className="size-5" strokeWidth={1.75} />
        <span className="ml-[9px] flex items-center gap-[9px]">
          <CloudIcon top="#0a62b8" bottom="#29a4ee" />
          <CloudIcon top="#9b9b9b" bottom="#dedede" outline="#333" />
          <SyncIcon />
        </span>
        <Keyboard className="ml-[14px] size-[22px]" strokeWidth={1.25} />
        <p className="ml-5 text-center">
          ENG
          <br />
          US
        </p>
        <Wifi className="ml-[22px] size-[22px]" strokeWidth={1.5} />
        <Volume2 className="ml-2 size-[22px]" strokeWidth={1.25} />
        <span className="ml-2">
          <BatteryIcon />
        </span>
        <p className="ml-[18px] text-right text-[15px]">
          9:52 AM
          <br />
          2022-09-22
        </p>
        <span className="ml-[9px] flex size-5 items-center justify-center rounded-full bg-[#0078d4] text-xs text-white">7</span>
      </div>
    </footer>
  );
}

export default function App() {
  return (
    <div className="flex h-screen flex-col overflow-hidden bg-white font-['Open_Sans','Noto_Sans',sans-serif]">
      <TabStrip />
      <AddressBar />
      <div className="flex min-h-0 flex-1">
        <SideNav />
        <main className="flex min-w-0 flex-1 flex-col">
          <CourseHeader />
          <div className="flex min-h-0 flex-1">
            <QuestionList />
            <Activity />
          </div>
          <div className="mr-[7px] mb-[3px] flex h-16 shrink-0 items-center justify-between bg-[#ccc] pr-[19px] pl-[175px] font-['Liberation_Sans',Arial,sans-serif] text-[15px] text-white">
            <button type="button" className="h-[39px] w-[100px] rounded-md bg-[#808080] shadow">
              Back
            </button>
            <button type="button" className="h-[39px] w-[100px] rounded-md bg-[#006298] shadow">
              Next
            </button>
          </div>
        </main>
        <ToolRail />
      </div>
      <Taskbar />
    </div>
  );
}
